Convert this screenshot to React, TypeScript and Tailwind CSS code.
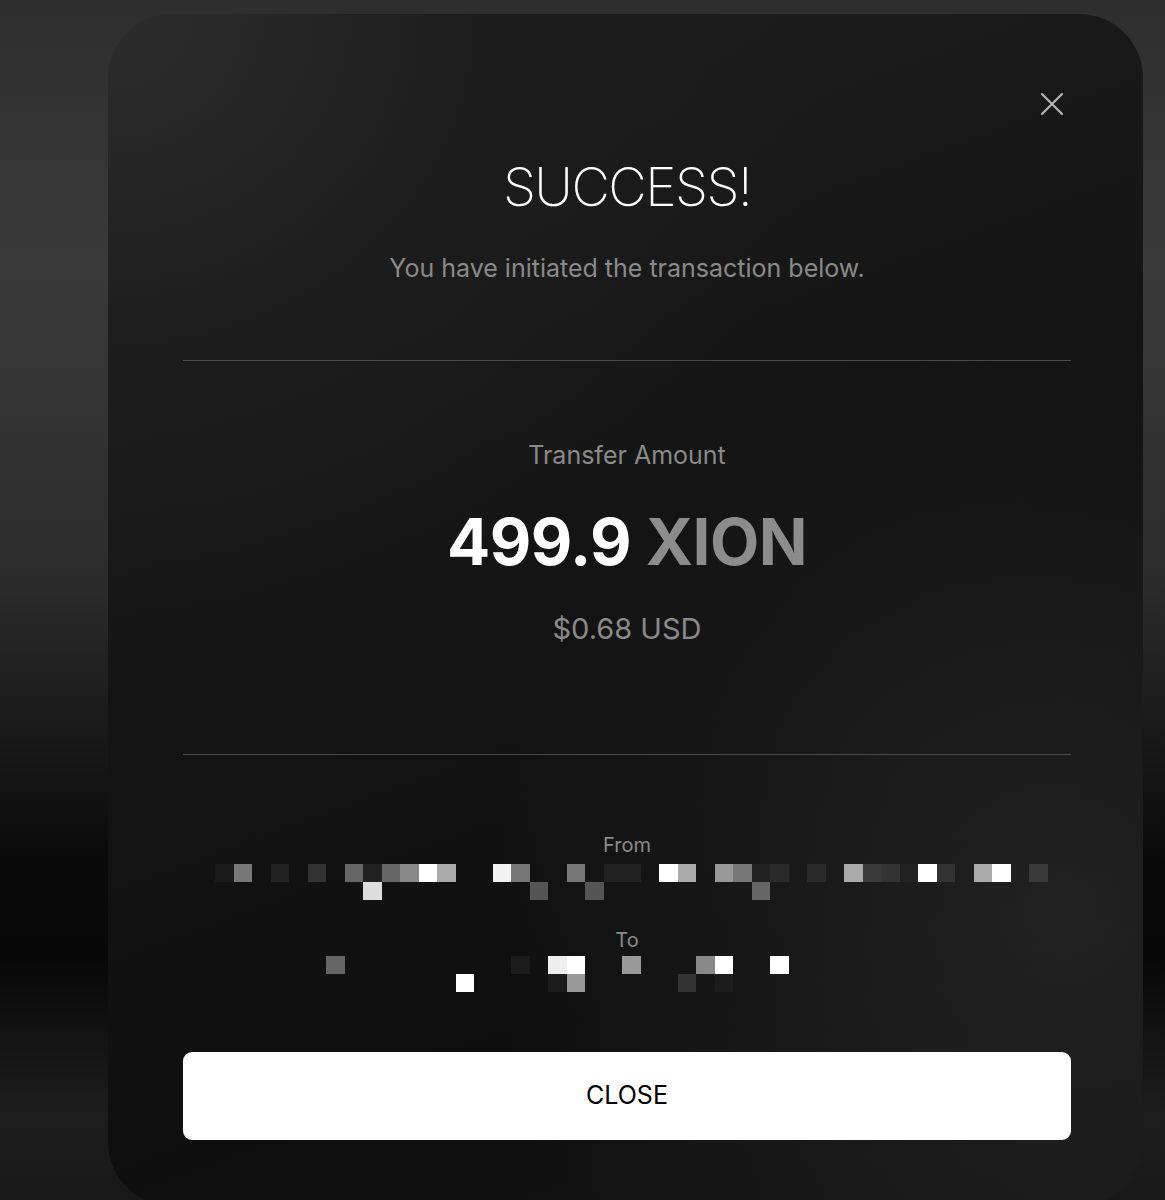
import * as React from "react";

const C = 45;

// pixelated address images: [column, row, colour]
const fromCells: [number, number, string][] = [
  [0, 0, "#1a1a1a"],
  [1, 0, "#777777"],
  [3, 0, "#222222"],
  [5, 0, "#333333"],
  [7, 0, "#666666"],
  [8, 0, "#222222"],
  [9, 0, "#666666"],
  [10, 0, "#888888"],
  [11, 0, "#ffffff"],
  [12, 0, "#aaaaaa"],
  [15, 0, "#f2f2f2"],
  [16, 0, "#777777"],
  [19, 0, "#777777"],
  [21, 0, "#222222"],
  [22, 0, "#222222"],
  [24, 0, "#ffffff"],
  [25, 0, "#aaaaaa"],
  [27, 0, "#999999"],
  [28, 0, "#777777"],
  [29, 0, "#222222"],
  [30, 0, "#2a2a2a"],
  [32, 0, "#2a2a2a"],
  [34, 0, "#aaaaaa"],
  [35, 0, "#3a3a3a"],
  [36, 0, "#333333"],
  [37, 0, "#222222"],
  [38, 0, "#ffffff"],
  [39, 0, "#333333"],
  [41, 0, "#aaaaaa"],
  [42, 0, "#ffffff"],
  [44, 0, "#3a3a3a"],
  [8, 1, "#dddddd"],
  [17, 1, "#555555"],
  [20, 1, "#555555"],
  [29, 1, "#666666"],
];

const toCells: [number, number, string][] = [
  [6, 0, "#666666"],
  [16, 0, "#1c1c1c"],
  [18, 0, "#eeeeee"],
  [19, 0, "#ffffff"],
  [22, 0, "#999999"],
  [26, 0, "#888888"],
  [27, 0, "#ffffff"],
  [30, 0, "#ffffff"],
  [13, 1, "#ffffff"],
  [18, 1, "#1c1c1c"],
  [19, 1, "#999999"],
  [25, 1, "#333333"],
  [27, 1, "#1c1c1c"],
];

function Mosaic({ cells }: { cells: [number, number, string][] }) {
  const rows = [0, 1].map((r) => {
    const row: (string | null)[] = Array(C).fill(null);
    cells.filter((c) => c[1] === r).forEach((c) => (row[c[0]] = c[2]));
    return row;
  });
  return (
    <div className="ml-[8px] flex w-[832px] flex-col self-center">
      {rows.map((row, i) => (
        <div key={i} className="flex h-[18px]">
          {row.map((bg, j) => (
            <div
              key={j}
              className="h-[18px] w-[18.5px] shrink-0"
              style={{ backgroundColor: bg ?? "transparent" }}
            />
          ))}
        </div>
      ))}
    </div>
  );
}

export default function App() {
  return (
    <div className="relative h-[1200px] w-full overflow-hidden bg-[linear-gradient(180deg,#2e2e2e_0%,#3a3a3a_22%,#2c2c2c_48%,#0a0a0a_72%,#080808_80%,#1e1e1e_93%,#181818_100%)] pl-[108px] pr-[22px] pt-[14px] font-['Inter','Liberation_Sans',sans-serif]">
      <div className="relative flex h-[1192px] flex-col rounded-[64px] bg-[radial-gradient(ellipse_55%_45%_at_92%_75%,rgba(48,48,48,0.55)_0%,rgba(48,48,48,0)_100%),radial-gradient(ellipse_70%_55%_at_0%_0%,#2d2d2d_0%,#1c1c1c_55%,rgba(20,20,20,0)_100%),linear-gradient(160deg,#1f1f1f_0%,#141414_45%,#0f0f0f_75%,#151515_100%)] pl-[75px] pr-[72px] pt-[145px]">
        <button className="absolute right-[80px] top-[79px] text-[#b5b5b5]">
          <svg width="22" height="22" viewBox="0 0 22 22" fill="none">
            <path
              d="M1 1L21 21M21 1L1 21"
              stroke="currentColor"
              strokeWidth="2.2"
              strokeLinecap="round"
            />
          </svg>
        </button>

        <h1 className="text-center text-[53px] font-extralight leading-[56px] tracking-[-1.5px] text-white">
          SUCCESS!
        </h1>
        <p className="mt-[39px] text-center text-[25px] leading-[28px] text-[#8a8a8a]">
          You have initiated the transaction below.
        </p>

        <div className="mt-[78px] h-px bg-[#4a4a4a]" />

        <p className="mt-[79px] text-center text-[25px] leading-[30px] text-[#8a8a8a]">
          Transfer Amount
        </p>
        <p className="mt-[39px] text-center text-[64px] font-bold leading-[66px] tracking-[-0.5px]">
          <span className="text-white">499.9</span>{" "}
          <span className="text-[#8c8c8c]">XION</span>
        </p>
        <p className="mt-[37px] text-center text-[29px] leading-[34px] text-[#8a8a8a]">
          $0.68 USD
        </p>

        <div className="mt-[108px] h-px bg-[#4a4a4a]" />

        <p className="mt-[80px] text-center text-[20px] leading-[20px] text-[#8a8a8a]">
          From
        </p>
        <div className="mt-[9px] flex flex-col">
          <Mosaic cells={fromCells} />
        </div>
        <p className="mt-[29px] text-center text-[20px] leading-[22px] text-[#8a8a8a]">
          To
        </p>
        <div className="mt-[5px] flex flex-col">
          <Mosaic cells={toCells} />
        </div>

        <button className="mt-[60px] h-[88px] w-full rounded-[9px] bg-white text-[25px] font-normal text-black">
          CLOSE
        </button>
      </div>
    </div>
  );
}
